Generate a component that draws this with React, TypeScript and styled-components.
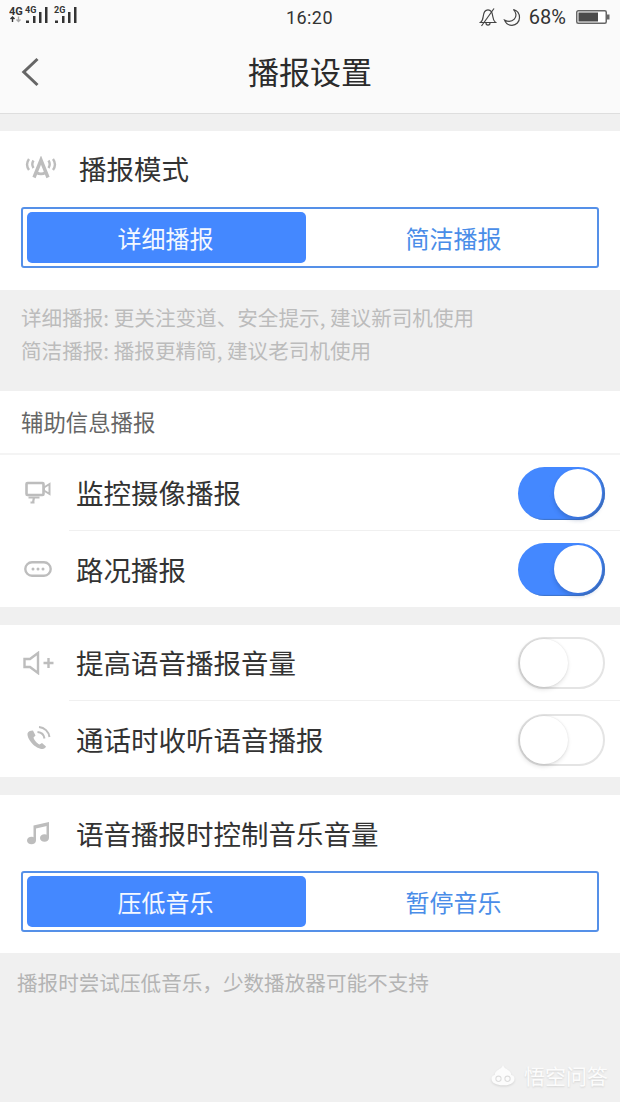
import React from 'react';
import styled, { createGlobalStyle } from 'styled-components';

const GlobalStyle = createGlobalStyle`
    html, body {
        margin: 0;
        padding: 0;
        background: #f0f0f0;
        font-family: "Noto Sans CJK SC", "Noto Sans", sans-serif;
    }
`;

const Page = styled.div`
    position: relative;
    width: 620px;
    height: 1102px;
    overflow: hidden;
    background: #f0f0f0;
    color: #2e2e2e;
`;

const Top = styled.div`
    height: 113px;
    background: #fafafa;
    border-bottom: 1px solid #dedede;
    box-sizing: content-box;
`;

const StatusBar = styled.div`
    height: 34px;
    display: grid;
    grid-template-columns: 1fr auto 1fr;
    align-items: center;
    padding: 0 10px 0 9px;
`;

const StatusLeft = styled.div`
    display: flex;
    align-items: center;
    gap: 3px;
    margin-top: -6px;
`;

const StatusRight = styled.div`
    display: flex;
    align-items: center;
    justify-content: flex-end;
    gap: 6px;
`;

const Clock = styled.span`
    font-family: "Roboto", sans-serif;
    font-size: 18px;
    color: #333;
    letter-spacing: 0.4px;
`;

const Percent = styled.span`
    font-family: "Roboto", sans-serif;
    font-size: 20px;
    color: #333;
    margin: 0 4px 0 2px;
`;

const Header = styled.div`
    position: relative;
    height: 79px;
    display: flex;
    align-items: center;
    justify-content: center;
`;

const Title = styled.div`
    font-size: 31px;
    line-height: 40px;
    margin-top: -6px;
    color: #2b2b2b;
`;

const Back = styled.svg`
    position: absolute;
    left: 21px;
    top: 22px;
`;

const Card = styled.section<{ $top?: number; $bottom?: number }>`
    background: #fff;
    margin-top: ${(props) => props.$top ?? 0}px;
    padding-bottom: ${(props) => props.$bottom ?? 0}px;
`;

const ModeHead = styled.div`
    height: 76px;
    display: flex;
    align-items: center;
    gap: 21px;
    padding-left: 24px;
    padding-bottom: 2px;
    box-sizing: border-box;
    font-size: 27.500px;
    color: #333;
`;

const IconSlot = styled.div`
    width: 34px;
    display: flex;
    justify-content: center;
    flex: none;
`;

const Segment = styled.div`
    width: 578px;
    height: 61px;
    margin-left: 21px;
    box-sizing: border-box;
    border: 2px solid #5590e8;
    border-radius: 3px;
    padding: 3px 4px;
    display: grid;
    grid-template-columns: 279px 1fr;
`;

const SegmentItem = styled.div<{ $active?: boolean }>`
    display: flex;
    align-items: center;
    justify-content: center;
    font-size: 24px;
    border-radius: 5px;
    padding: ${(props) => (props.$active ? '0 2px 0 0' : '0 0 0 8px')};
    background: ${(props) => (props.$active ? '#4488ff' : 'transparent')};
    color: ${(props) => (props.$active ? '#f4f8ff' : '#4a8de8')};
`;

const Note = styled.div`
    height: 101px;
    box-sizing: border-box;
    padding: 11px 21px 0;
    font-size: 20.600px;
    line-height: 33px;
    color: #bcbcbc;
`;

const SubTitle = styled.div`
    height: 64px;
    box-sizing: border-box;
    padding: 14px 21px 0;
    font-size: 22.400px;
    line-height: 32px;
    color: #666;
    border-bottom: 2px solid #f4f4f4;
`;

const Row = styled.div<{ $height: number }>`
    height: ${(props) => props.$height}px;
    display: flex;
    align-items: center;
    padding-left: 21px;
    padding-right: 15px;
`;

const RowIcon = styled.div`
    width: 34px;
    margin-right: 21px;
    display: flex;
    justify-content: center;
    flex: none;
`;

const RowText = styled.div`
    flex: 1;
    font-size: 27.500px;
    line-height: 36px;
    color: #333;
    margin-top: -1px;
`;

const Divider = styled.div`
    height: 1px;
    margin-left: 69px;
    background: #f0f0f0;
`;

const Track = styled.div<{ $on: boolean }>`
    position: relative;
    width: 87px;
    height: ${(props) => (props.$on ? '53px' : '52px')};
    margin-top: 1px;
    box-sizing: border-box;
    border-radius: 27px;
    background: ${(props) => (props.$on ? '#4488ff' : '#fff')};
    border: ${(props) => (props.$on ? 'none' : '2px solid #e4e4e4')};
    box-shadow: ${(props) => (props.$on ? 'inset -2px -1px 1px #3f74c8' : 'none')};
`;

const Knob = styled.div<{ $on: boolean }>`
    position: absolute;
    width: 48px;
    height: 48px;
    border-radius: 50%;
    background: #fff;
    top: ${(props) => (props.$on ? '2px' : '0')};
    left: ${(props) => (props.$on ? '36px' : '0')};
    box-shadow: ${(props) =>
        props.$on
            ? '0 3px 4px rgba(30, 60, 120, 0.3)'
            : '-1px 2px 5px rgba(0, 0, 0, 0.14), 0 0 2px rgba(0, 0, 0, 0.1)'};
`;

const FootNote = styled.div`
    padding: 14px 17px 0;
    font-size: 20.600px;
    line-height: 30px;
    color: #b4b4b4;
`;

const Watermark = styled.div`
    position: absolute;
    right: 12px;
    bottom: 12px;
    display: flex;
    align-items: center;
    gap: 8px;
    font-size: 21px;
    line-height: 30px;
    color: #fcfcfc;
    text-shadow: 0 1px 2px rgba(0, 0, 0, 0.12);
`;

const Signal = ({ label, extra }: { label: string; extra?: boolean }) => (
    <svg width={extra ? 41 : 26} height="26" viewBox={extra ? '0 0 41 26' : '0 0 26 26'}>
        {extra && (
            <g>
                <text x="0" y="14" fontSize="11" fontWeight="700" fontFamily="Roboto, sans-serif" fill="#333">4G</text>
                <path d="M3.500 21v-5M1.500 18l2-2 2 2" stroke="#333" strokeWidth="1.400" fill="none" />
                <path d="M9.500 15.500v5M7.500 18.500l2 2 2-2" stroke="#aaa" strokeWidth="1.400" fill="none" />
            </g>
        )}
        <g transform={extra ? 'translate(15 0)' : undefined}>
            <text x="1" y="12" fontSize="9" fontWeight="700" fontFamily="Roboto, sans-serif" fill="#333">{label}</text>
            <rect x="2" y="19.500" width="3" height="2.500" fill="#333" />
            <rect x="9" y="15" width="2.500" height="7" fill="#333" />
            <rect x="15" y="11" width="2.500" height="11" fill="#333" />
            <rect x="21" y="6" width="2.500" height="16" fill="#333" />
        </g>
    </svg>
);

const BellOff = () => (
    <svg width="18" height="20" viewBox="0 0 18 20" fill="none" stroke="#444" strokeWidth="1.200">
        <path d="M1.500 15.500h15c-2-1.500-2.400-3.500-2.700-6C13.400 5.500 12 2.800 9 2.800S4.600 5.500 4.200 9.500c-.3 2.500-.7 4.500-2.700 6Z" />
        <path d="M7 16c0 2.800 4 2.800 4 0" />
        <path d="M15 1.500 2.500 19" />
    </svg>
);

const Moon = () => (
    <svg width="18" height="19" viewBox="0 0 18 19" fill="none" stroke="#444" strokeWidth="1.200">
        <path d="M10.500 1.500c3 2.800 3.200 7 .8 9.600-2.400 2.500-6.300 2.700-9.800 1 1.300 3.300 4.300 5.200 7.500 5.200 4.300 0 7.500-3.500 7.500-7.800 0-3.700-2.400-6.900-6-8Z" />
    </svg>
);

const Battery = () => (
    <svg width="34" height="16" viewBox="0 0 34 16">
        <rect x="0.750" y="1.750" width="29.500" height="12.500" rx="1.500" fill="#fff" stroke="#666" strokeWidth="1.500" />
        <rect x="2.500" y="3.500" width="19.500" height="9" fill="#4a4a4a" />
        <rect x="31" y="5.500" width="2.500" height="5" fill="#666" />
    </svg>
);

const BroadcastIcon = () => (
    <svg width="32" height="24" viewBox="0 0 32 24" fill="none" stroke="#bdbdbd" strokeWidth="2.400">
        <path d="M9 21.500 16 4l7 17.500" strokeWidth="3.400" />
        <path d="M11.500 16.500c2.500 1.700 6.500 1.700 9 0" strokeWidth="2.800" />
        <path d="M8.500 4.500c-1.600 2.500-1.600 5 0 7.500M4 3C1.500 6.500 1.500 10.500 4 14" />
        <path d="M23.500 4.500c1.600 2.500 1.600 5 0 7.500M28 3c2.500 3.500 2.500 7.500 0 11" />
    </svg>
);

const CameraIcon = () => (
    <svg width="26" height="24" viewBox="0 0 26 24" fill="none" stroke="#bdbdbd" strokeWidth="2.600">
        <rect x="1.500" y="2" width="17" height="12" rx="1" />
        <path d="M19 6.500 24.500 3v10L19 9.500Z" strokeWidth="2" />
        <path d="M3.500 16.500h11M9 16.500l-1 5M5.500 21.500h4" strokeWidth="2.200" />
    </svg>
);

const TrafficIcon = () => (
    <svg width="28" height="16" viewBox="0 0 28 16">
        <rect x="1.300" y="1.300" width="25.400" height="13.400" rx="6.700" fill="none" stroke="#bdbdbd" strokeWidth="2.400" />
        <circle cx="9" cy="8" r="1.500" fill="#bdbdbd" />
        <circle cx="14" cy="8" r="1.500" fill="#bdbdbd" />
        <circle cx="19" cy="8" r="1.500" fill="#bdbdbd" />
    </svg>
);

const VolumeIcon = () => (
    <svg width="31" height="24" viewBox="0 0 31 24" fill="none" stroke="#bdbdbd" strokeWidth="2.400">
        <path d="M1.500 8v8H7l8 6V2L7 8Z" />
        <path d="M20.500 12H30.500M25.500 7v10" />
    </svg>
);

const PhoneIcon = () => (
    <svg width="26" height="26" viewBox="0 0 26 26" fill="none">
        <path d="M2.500 7.500c-.5 6 8 15.500 15 15.500 1.500 0 3-1 3.500-2.500l-4-3.500-2.500 1.500c-2.500-1-5.500-4.500-6-7l2-2L8 4.500C5 4.500 3 5.500 2.500 7.500Z" fill="#bdbdbd" />
        <path d="M12.500 6c3.700.3 6.500 3 7 6.500" stroke="#bdbdbd" strokeWidth="2" />
        <path d="M14 1c5.500.5 9.700 4.500 10.500 10" stroke="#bdbdbd" strokeWidth="2" />
    </svg>
);

const MusicIcon = () => (
    <svg width="24" height="24" viewBox="0 0 24 24" fill="#bdbdbd">
        <path d="M7.500 4.500 23 1v3.500L10 7.500V19H7.500Z" />
        <path d="M20.500 2H23v15h-2.500Z" />
        <ellipse cx="5.500" cy="19.500" rx="4.500" ry="3.800" />
        <ellipse cx="18.500" cy="17" rx="4.500" ry="3.800" />
    </svg>
);

const WukongLogo = () => (
    <svg width="26" height="23" viewBox="0 0 30 28" fill="#fcfcfc" style={{ filter: 'drop-shadow(0 1px 1px rgba(0,0,0,0.12))' }}>
        <path d="M15 1c1 4 4 5 7 7 2 1.500 3 3.500 3 5.500 2.500.5 4 2 4 4.500 0 5-6 8-14 8S1 23 1 18c0-2.500 1.500-4 4-4.500 0-2 1-4 3-5.500 3-2 6-3 7-7Z" />
        <circle cx="9.500" cy="18" r="3.200" fill="none" stroke="#ddd" strokeWidth="1.300" />
        <circle cx="20.500" cy="18" r="3.200" fill="none" stroke="#ddd" strokeWidth="1.300" />
    </svg>
);

const Toggle = ({ on }: { on: boolean }) => (
    <Track $on={on}>
        <Knob $on={on} />
    </Track>
);

export default function App() {
    return (
        <Page>
            <GlobalStyle />
            <Top>
                <StatusBar>
                    <StatusLeft>
                        <Signal label="4G" extra />
                        <Signal label="2G" />
                    </StatusLeft>
                    <Clock>16:20</Clock>
                    <StatusRight>
                        <BellOff />
                        <Moon />
                        <Percent>68%</Percent>
                        <Battery />
                    </StatusRight>
                </StatusBar>
                <Header>
                    <Back width="20" height="32" viewBox="0 0 20 32" fill="none" stroke="#666" strokeWidth="3">
                        <path d="M16.500 3 2.800 16l13.700 13" />
                    </Back>
                    <Title>播报设置</Title>
                </Header>
            </Top>
            <Card $top={17} $bottom={22}>
                <ModeHead>
                    <IconSlot><BroadcastIcon /></IconSlot>
                    播报模式
                </ModeHead>
                <Segment>
                    <SegmentItem $active>详细播报</SegmentItem>
                    <SegmentItem>简洁播报</SegmentItem>
                </Segment>
            </Card>
            <Note>
                详细播报: 更关注变道、安全提示, 建议新司机使用
                <br />
                简洁播报: 播报更精简, 建议老司机使用
            </Note>
            <Card>
                <SubTitle>辅助信息播报</SubTitle>
                <Row $height={75}>
                    <RowIcon><CameraIcon /></RowIcon>
                    <RowText>监控摄像播报</RowText>
                    <Toggle on />
                </Row>
                <Divider />
                <Row $height={76}>
                    <RowIcon><TrafficIcon /></RowIcon>
                    <RowText>路况播报</RowText>
                    <Toggle on />
                </Row>
            </Card>
            <Card $top={18}>
                <Row $height={75}>
                    <RowIcon><VolumeIcon /></RowIcon>
                    <RowText>提高语音播报音量</RowText>
                    <Toggle on={false} />
                </Row>
                <Divider />
                <Row $height={76}>
                    <RowIcon><PhoneIcon /></RowIcon>
                    <RowText>通话时收听语音播报</RowText>
                    <Toggle on={false} />
                </Row>
            </Card>
            <Card $top={18} $bottom={21}>
                <Row $height={76}>
                    <RowIcon><MusicIcon /></RowIcon>
                    <RowText>语音播报时控制音乐音量</RowText>
                </Row>
                <Segment>
                    <SegmentItem $active>压低音乐</SegmentItem>
                    <SegmentItem>暂停音乐</SegmentItem>
                </Segment>
            </Card>
            <FootNote>播报时尝试压低音乐，少数播放器可能不支持</FootNote>
            <Watermark>
                <WukongLogo />
                悟空问答
            </Watermark>
        </Page>
    );
}
